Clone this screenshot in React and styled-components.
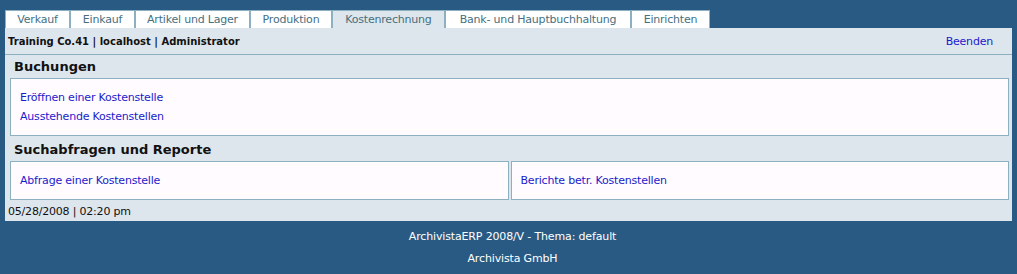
import React from "react";
import styled, { createGlobalStyle } from "styled-components";

const Global = createGlobalStyle`
  html, body { margin: 0; padding: 0; background: #295a83; }
  body { font-family: "DejaVu Sans", Verdana, sans-serif; font-size: 11px; letter-spacing: -0.2px; }
`;

const Page = styled.div`
  padding: 10px 5px 0 5px;
`;

const TabBar = styled.div`
  display: flex;
`;

const Tab = styled.div`
  box-sizing: border-box;
  width: ${(p) => p.$w}px;
  height: 18px;
  line-height: 17px;
  text-align: center;
  border: 1px solid #8db0c0;
  border-bottom: none;
  background: ${(p) => (p.$active ? "#dee6ed" : "#ffffff")};
  color: #46707f;
  font-size: 11px;
  white-space: nowrap;
`;

const Panel = styled.div`
  background: #dee6ed;
  padding-bottom: 1px;
`;

const HeaderRow = styled.div`
  display: flex;
  justify-content: space-between;
  align-items: center;
  height: 26px;
  padding: 0 19px 0 3px;
  border-bottom: 1px solid #8db0c0;
`;

const Company = styled.span`
  font-weight: bold;
  font-size: 10px;
  letter-spacing: 0;
  color: #111;
`;

const Link = styled.a`
  color: #1a1acc;
  text-decoration: none;
  cursor: pointer;
`;

const Content = styled.div`
  padding: 0 3px 0 5px;
`;

const Heading = styled.div`
  font-size: 13px;
  font-weight: bold;
  letter-spacing: 0;
  color: #111;
  padding: 3px 0 0 4px;
  height: 20px;
  line-height: 17px;
`;

const BoxRow = styled.div`
  display: flex;
  gap: 2px;
  margin-bottom: 2px;
`;

const Box = styled.div`
  flex: 1;
  background: #fffbff;
  border: 1px solid #8db0c0;
  padding: 12px 9px 11px;
  display: flex;
  flex-direction: column;
  gap: 5px;
`;

const Item = styled(Link)`
  line-height: 14px;
  height: 14px;
`;

const DateLine = styled.div`
  color: #111;
  padding: 3px 0 0 3px;
  height: 18px;
  line-height: 14px;
  box-sizing: border-box;
`;

const Footer = styled.div`
  color: #ffffff;
  text-align: center;
  padding: 9px 0 0 8px;
  display: flex;
  flex-direction: column;
  gap: 8px;
  line-height: 14px;
  letter-spacing: -0.15px;
`;

const tabs = [
  ["Verkauf", 65],
  ["Einkauf", 65],
  ["Artikel und Lager", 115],
  ["Produktion", 82],
  ["Kostenrechnung", 113, true],
  ["Bank- und Hauptbuchhaltung", 186],
  ["Einrichten", 79],
];

export default function App() {
  return (
    <>
      <Global />
      <Page>
        <TabBar>
          {tabs.map(([t, w, active]) => (
            <Tab key={t} $w={w} $active={active}>
              {t}
            </Tab>
          ))}
        </TabBar>
        <Panel>
          <HeaderRow>
            <Company>Training Co.41 | localhost | Administrator</Company>
            <Link>Beenden</Link>
          </HeaderRow>
          <Content>
            <Heading>Buchungen</Heading>
            <BoxRow>
              <Box>
                <Item>Eröffnen einer Kostenstelle</Item>
                <Item>Ausstehende Kostenstellen</Item>
              </Box>
            </BoxRow>
            <Heading>Suchabfragen und Reporte</Heading>
            <BoxRow>
              <Box>
                <Item>Abfrage einer Kostenstelle</Item>
              </Box>
              <Box>
                <Item>Berichte betr. Kostenstellen</Item>
              </Box>
            </BoxRow>
          </Content>
          <DateLine>05/28/2008 | 02:20 pm</DateLine>
        </Panel>
        <Footer>
          <div>ArchivistaERP 2008/V - Thema: default</div>
          <div>Archivista GmbH</div>
        </Footer>
      </Page>
    </>
  );
}
